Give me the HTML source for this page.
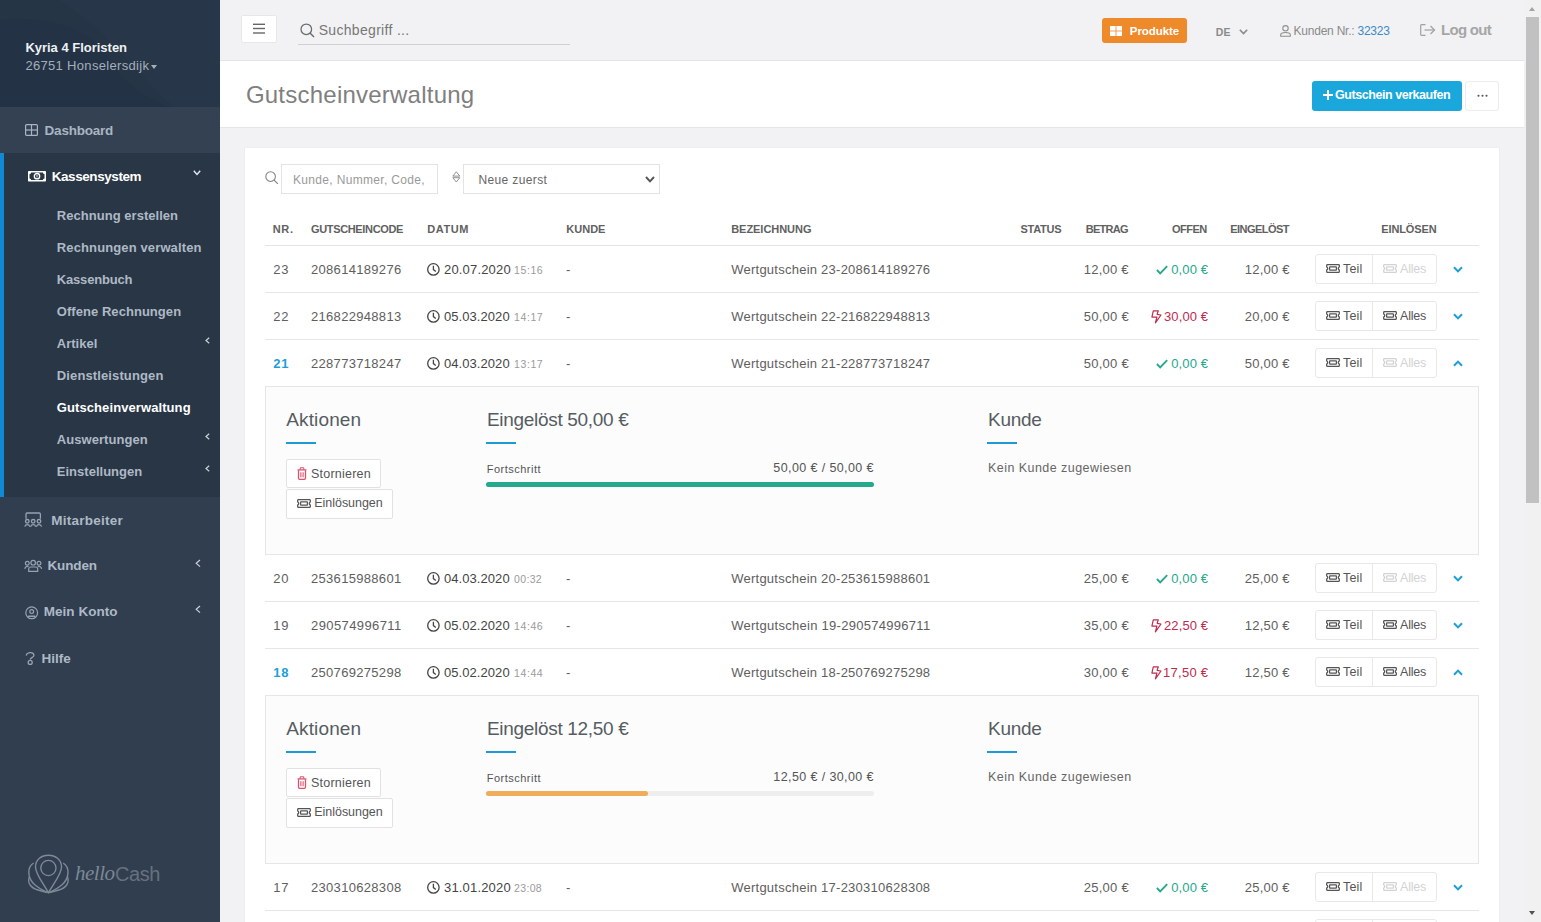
<!DOCTYPE html>
<html><head><meta charset="utf-8"><title>Gutscheinverwaltung</title><style>
*{box-sizing:border-box;margin:0;padding:0}
html,body{width:1541px;height:922px;overflow:hidden;background:#f2f2f4;font-family:"Liberation Sans",sans-serif;color:#555;position:relative}
.abs{position:absolute}
.ic{position:absolute;overflow:visible}
.t{position:absolute;white-space:nowrap;line-height:1}
#sb{position:absolute;left:0;top:0;width:220px;height:922px;background:#303e4f;overflow:hidden}
#sbtop{position:absolute;left:0;top:0;width:220px;height:107px;background:#263546}
#dash{position:absolute;left:0;top:107px;width:220px;height:46px;background:#334153}
#kasse{position:absolute;left:0;top:153px;width:220px;height:344px;background:#293646}
#kasse .bar{position:absolute;left:0;top:0;width:4px;height:344px;background:#118ad6}
#hdr{position:absolute;left:220px;top:0;width:1304px;height:61px;background:#f2f2f4;border-bottom:1px solid #e3e4e7}
#title{position:absolute;left:220px;top:61px;width:1304px;height:67px;background:#fff;border-bottom:1px solid #e6e6e8}
#card{position:absolute;left:245px;top:148px;width:1254px;height:800px;background:#fff;box-shadow:0 0 1px rgba(0,0,0,0.12)}
#scroll{position:absolute;left:1524px;top:0;width:17px;height:922px;background:#f1f1f1}
</style></head><body>
<div id="sb">
<div id="sbtop"><svg width="220" height="107" style="position:absolute;left:0;top:0"><path d="M0,20 C40,15 90,25 110,60 C125,85 150,100 170,107 L0,107 Z" fill="#223042" opacity="0.6"/><path d="M60,0 L220,0 L220,107 L175,107 C140,80 120,40 60,0 Z" fill="#283a4c" opacity="0.5"/></svg></div>
<div id="dash"></div>
<div id="kasse"><div class="bar"></div></div>
</div>
<div class="abs" style="left:150.5px;top:64.5px;width:0;height:0;border-left:3.7px solid transparent;border-right:3.7px solid transparent;border-top:4.5px solid #a4afbb"></div>
<svg class="ic" style="left:24.5px;top:124px;" width="13" height="12" viewBox="0 0 13 12"><rect x="0.6" y="0.6" width="11.8" height="10.8" rx="1" fill="none" stroke="#aab5c1" stroke-width="1.2"/><line x1="6.5" y1="0.6" x2="6.5" y2="11.4" stroke="#aab5c1" stroke-width="1.2"/><line x1="0.6" y1="6" x2="12.4" y2="6" stroke="#aab5c1" stroke-width="1.2"/></svg>
<svg class="ic" style="left:28.2px;top:170.8px;" width="18" height="10.4" viewBox="0 0 18 10.4"><rect x="0" y="0" width="18" height="10.4" rx="0.6" fill="#fff"/><path d="M3.1,1.4 H14.9 A1.6,1.6 0 0 0 16.5,3 V7.4 A1.6,1.6 0 0 0 14.9,9 H3.1 A1.6,1.6 0 0 0 1.5,7.4 V3 A1.6,1.6 0 0 0 3.1,1.4 Z" fill="#293646"/><circle cx="9" cy="5.2" r="2.7" fill="none" stroke="#fff" stroke-width="1.3"/><rect x="8.4" y="3.9" width="1.2" height="2.6" fill="#c8ccd2"/></svg>
<svg class="ic" style="left:193px;top:170px;" width="8" height="6" viewBox="0 0 8 6"><polyline points="0.8,0.8 4,4.4 7.2,0.8" fill="none" stroke="#e8ecf0" stroke-width="1.4"/></svg>
<svg class="ic" style="left:205px;top:336.7px;" width="5" height="7" viewBox="0 0 5 7"><polyline points="4.2,0.7 1,3.5 4.2,6.3" fill="none" stroke="#c9d1da" stroke-width="1.2"/></svg>
<svg class="ic" style="left:205px;top:432.7px;" width="5" height="7" viewBox="0 0 5 7"><polyline points="4.2,0.7 1,3.5 4.2,6.3" fill="none" stroke="#c9d1da" stroke-width="1.2"/></svg>
<svg class="ic" style="left:205px;top:464.7px;" width="5" height="7" viewBox="0 0 5 7"><polyline points="4.2,0.7 1,3.5 4.2,6.3" fill="none" stroke="#c9d1da" stroke-width="1.2"/></svg>
<svg class="ic" style="left:24px;top:512px;" width="18" height="16" viewBox="0 0 18 16"><g fill="none" stroke="#96a3b2" stroke-width="1.3"><path d="M2,6.8 V2.2 A1.2,1.2 0 0 1 3.2,1 H15.2 A1.2,1.2 0 0 1 16.4,2.2 V6.8"/><circle cx="3.3" cy="9.3" r="1.8"/><circle cx="9.2" cy="9.3" r="1.8"/><circle cx="15" cy="9.3" r="1.8"/><path d="M0.8,14.6 A2.6,2.6 0 0 1 5.8,14.6 M6.7,14.6 A2.6,2.6 0 0 1 11.7,14.6 M12.5,14.6 A2.6,2.6 0 0 1 17.5,14.6"/></g></svg>
<svg class="ic" style="left:24px;top:559px;" width="18" height="14" viewBox="0 0 18 14"><g fill="none" stroke="#96a3b2" stroke-width="1.2"><circle cx="9.2" cy="3.7" r="2.3"/><circle cx="3.3" cy="4.3" r="1.9"/><circle cx="15" cy="4.3" r="1.9"/><path d="M4.7,12.4 V10 A2,2 0 0 1 6.7,8 H11.7 A2,2 0 0 1 13.7,10 V12.4 Z"/><path d="M0.8,9.8 A2.8,2.8 0 0 1 4.6,7.6 M17.6,9.8 A2.8,2.8 0 0 0 13.8,7.6"/></g></svg>
<svg class="ic" style="left:195px;top:559px;" width="6" height="9" viewBox="0 0 6 9"><polyline points="5,1 1.2,4.3 5,7.6" fill="none" stroke="#c9d1da" stroke-width="1.2"/></svg>
<svg class="ic" style="left:24.5px;top:605.5px;" width="14" height="14" viewBox="0 0 14 14"><g fill="none" stroke="#96a3b2" stroke-width="1.2"><circle cx="6.7" cy="6.8" r="5.9"/><circle cx="6.7" cy="5.6" r="1.9"/><path d="M3.6,10.3 H9.8" stroke-linecap="round" stroke-width="1.6"/></g></svg>
<svg class="ic" style="left:195px;top:605px;" width="6" height="9" viewBox="0 0 6 9"><polyline points="5,1 1.2,4.3 5,7.6" fill="none" stroke="#c9d1da" stroke-width="1.2"/></svg>
<svg class="ic" style="left:24.5px;top:651px;" width="11" height="15" viewBox="0 0 11 15"><g fill="none" stroke="#96a3b2" stroke-width="1.3"><path d="M1.4,4.6 C1.2,1.4 8.8,0.2 8.9,4.2 C9,6.6 5.2,6.6 5.2,8.6"/><circle cx="5.2" cy="11.4" r="2"/></g></svg>
<svg class="ic" style="left:25px;top:850px;" width="47" height="48" viewBox="0 0 47 48"><g fill="none" stroke="#7f8a96" stroke-width="1.4"><path d="M23.4,42.7 C18,33 10.5,24 10.5,17 C10.5,9.5 16.5,5.2 23.4,5.2 C30.3,5.2 36.5,9.5 36.5,17 C36.5,24 29,33 23.4,42.7 Z"/><circle cx="23.4" cy="18" r="7.6"/><path d="M8.6,13 C2,17 2,28 10,35 C14,38.5 19,41 22.6,42.6"/><path d="M4.3,27 C2,33 6,38 13,40 C17,41.2 20,42 22.6,42.6"/><path d="M 38.2 13.0 C 44.8 17.0 44.8 28.0 36.8 35.0 C 32.8 38.5 27.8 41.0 24.2 42.6"/><path d="M 42.5 27.0 C 44.8 33.0 40.8 38.0 33.8 40.0 C 29.8 41.2 26.8 42.0 24.2 42.6"/></g></svg>
<div class="t" style="left:75px;top:863px;font-family:'Liberation Serif',serif;font-style:italic;font-size:21px;color:#7d8894;letter-spacing:-0.5px">hello</div>
<div class="t" style="left:115px;top:863.5px;font-size:20px;color:#66717d;letter-spacing:-0.4px">Cash</div>
<div id="hdr"></div>
<div class="abs" style="left:241px;top:15px;width:36px;height:28px;background:#fff;border:1px solid #e6e7ea;border-radius:2px"></div>
<svg class="ic" style="left:253px;top:23px;" width="12" height="11" viewBox="0 0 12 11"><g stroke="#666" stroke-width="1.4"><line x1="0" y1="1.3" x2="12" y2="1.3"/><line x1="0" y1="5.5" x2="12" y2="5.5"/><line x1="0" y1="10" x2="12" y2="10"/></g></svg>
<svg class="ic" style="left:299.5px;top:22.5px;" width="15" height="15" viewBox="0 0 15 15"><circle cx="6.3" cy="6.3" r="5.3" fill="none" stroke="#6a6a6a" stroke-width="1.25"/><line x1="10" y1="10" x2="14" y2="14" stroke="#6a6a6a" stroke-width="1.4"/></svg>
<div class="abs" style="left:298px;top:44px;width:272px;height:1px;background:#cfd0d3"></div>
<div class="abs" style="left:1102px;top:18px;width:85px;height:25px;background:#ef8a2b;border-radius:3px"></div>
<svg class="ic" style="left:1109.5px;top:26px;" width="12" height="10" viewBox="0 0 12 10"><rect x="0" y="0" width="5.6" height="4.6" fill="#fff"/><rect x="6.4" y="0" width="5.6" height="4.6" fill="#fff"/><rect x="0" y="5.4" width="5.6" height="4.6" fill="#fff"/><rect x="6.4" y="5.4" width="5.6" height="4.6" fill="#fff"/></svg>
<svg class="ic" style="left:1239.3px;top:28.6px;" width="9" height="6" viewBox="0 0 9 6"><polyline points="0.8,0.8 4.5,4.6 8.2,0.8" fill="none" stroke="#8a8a8a" stroke-width="1.6"/></svg>
<svg class="ic" style="left:1280px;top:25px;" width="11" height="12" viewBox="0 0 11 12"><circle cx="5.5" cy="3.3" r="2.7" fill="none" stroke="#8f8f8f" stroke-width="1.1"/><path d="M0.7,11.3 V9.8 C0.7,6.8 10.3,6.8 10.3,9.8 V11.3 Z" fill="none" stroke="#8f8f8f" stroke-width="1.1"/></svg>
<svg class="ic" style="left:1419.5px;top:23.5px;" width="16" height="12" viewBox="0 0 16 12"><path d="M5.5,0.7 H1.5 A0.8,0.8 0 0 0 0.7,1.5 V10.5 A0.8,0.8 0 0 0 1.5,11.3 H5.5" fill="none" stroke="#a0a0a0" stroke-width="1.2"/><line x1="4.5" y1="6" x2="14.5" y2="6" stroke="#a0a0a0" stroke-width="1.2"/><polyline points="10.5,2 14.5,6 10.5,10" fill="none" stroke="#a0a0a0" stroke-width="1.2"/></svg>
<div id="title"></div>
<div class="abs" style="left:1312px;top:81px;width:150px;height:30px;background:#19a7dc;border-radius:3px"></div>
<svg class="ic" style="left:1322.5px;top:90px;" width="10" height="10" viewBox="0 0 10 10"><line x1="5" y1="0" x2="5" y2="10" stroke="#fff" stroke-width="2"/><line x1="0" y1="5" x2="10" y2="5" stroke="#fff" stroke-width="2"/></svg>
<div class="abs" style="left:1465px;top:81px;width:34px;height:30px;background:#fff;border:1px solid #ececec;border-radius:3px"></div>
<svg class="ic" style="left:1476.5px;top:93.5px;" width="12" height="4" viewBox="0 0 12 4"><circle cx="1.5" cy="1.8" r="1.05" fill="#555"/><circle cx="5.5" cy="1.8" r="1.05" fill="#555"/><circle cx="9.5" cy="1.8" r="1.05" fill="#555"/></svg>
<div id="card"></div>
<svg class="ic" style="left:264.5px;top:170.5px;" width="14" height="14" viewBox="0 0 14 14"><circle cx="5.6" cy="5.6" r="4.8" fill="none" stroke="#808080" stroke-width="1.05"/><line x1="9.1" y1="9.1" x2="12.9" y2="12.9" stroke="#808080" stroke-width="1.15"/></svg>
<div class="abs" style="left:281px;top:164px;width:157px;height:30px;border:1px solid #e3e3e3;background:#fff"></div>
<svg class="ic" style="left:451.5px;top:171px;" width="10" height="12" viewBox="0 0 10 12"><g fill="none" stroke="#8a8a8a" stroke-width="0.95" stroke-linejoin="round"><path d="M0.8,5.1 L4.3,0.8 L7.8,5.1 Z"/><path d="M0.8,6.7 L4.3,11 L7.8,6.7 Z"/></g></svg>
<div class="abs" style="left:463px;top:164px;width:197px;height:30px;border:1px solid #e3e3e3;background:#fff"></div>
<svg class="ic" style="left:645px;top:176px;" width="10" height="7" viewBox="0 0 10 7"><polyline points="1,1 5,5.3 9,1" fill="none" stroke="#555" stroke-width="1.9"/></svg>
<div class="abs" style="left:265px;top:245px;width:1214px;height:1px;background:#e3e3e3"></div>
<div class="abs" style="left:265px;top:292px;width:1214px;height:1px;background:#e6e6e6"></div>
<svg class="ic" style="left:427px;top:262.5px;" width="13" height="13" viewBox="0 0 13 13"><circle cx="6.4" cy="6.4" r="5.7" fill="none" stroke="#444" stroke-width="1.3"/><polyline points="6.4,2.8 6.4,6.6 8.8,8.4" fill="none" stroke="#444" stroke-width="1.3"/></svg>
<svg class="ic" style="left:1155.5px;top:264.5px;" width="12" height="10" viewBox="0 0 12 10"><polyline points="0.9,5 4.2,8.3 11.2,1.2" fill="none" stroke="#25a88b" stroke-width="1.9"/></svg>
<div class="abs" style="left:1315px;top:254px;width:122px;height:30px;border:1px solid #e8e8e8;border-radius:3px;background:#fff"></div>
<div class="abs" style="left:1372px;top:254px;width:1px;height:30px;background:#e8e8e8"></div>
<svg class="ic" style="left:1326px;top:263.5px;" width="14" height="9" viewBox="0 0 14 9"><path d="M1.2,0.7 H12.8 A0.6,0.6 0 0 1 13.3,1.3 V3 A1.6,1.6 0 0 0 13.3,6 V7.7 A0.6,0.6 0 0 1 12.8,8.3 H1.2 A0.6,0.6 0 0 1 0.7,7.7 V6 A1.6,1.6 0 0 0 0.7,3 V1.3 A0.6,0.6 0 0 1 1.2,0.7 Z" fill="none" stroke="#555" stroke-width="1.3"/><rect x="3.6" y="2.8" width="6.8" height="3.4" rx="0.4" fill="none" stroke="#555" stroke-width="1.2"/></svg>
<svg class="ic" style="left:1383px;top:263.5px;" width="14" height="9" viewBox="0 0 14 9"><path d="M1.2,0.7 H12.8 A0.6,0.6 0 0 1 13.3,1.3 V3 A1.6,1.6 0 0 0 13.3,6 V7.7 A0.6,0.6 0 0 1 12.8,8.3 H1.2 A0.6,0.6 0 0 1 0.7,7.7 V6 A1.6,1.6 0 0 0 0.7,3 V1.3 A0.6,0.6 0 0 1 1.2,0.7 Z" fill="none" stroke="#d3d3d3" stroke-width="1.3"/><rect x="3.6" y="2.8" width="6.8" height="3.4" rx="0.4" fill="none" stroke="#d3d3d3" stroke-width="1.2"/></svg>
<svg class="ic" style="left:1452.5px;top:265.5px;" width="10" height="7" viewBox="0 0 10 7"><polyline points="1,1.2 5,5.4 9,1.2" fill="none" stroke="#1d9fd6" stroke-width="2"/></svg>
<div class="abs" style="left:265px;top:339px;width:1214px;height:1px;background:#e6e6e6"></div>
<svg class="ic" style="left:427px;top:309.5px;" width="13" height="13" viewBox="0 0 13 13"><circle cx="6.4" cy="6.4" r="5.7" fill="none" stroke="#444" stroke-width="1.3"/><polyline points="6.4,2.8 6.4,6.6 8.8,8.4" fill="none" stroke="#444" stroke-width="1.3"/></svg>
<svg class="ic" style="left:1150.5px;top:309.5px;" width="11" height="14" viewBox="0 0 11 14"><path d="M2.3,0.9 H7.3 L6.1,4.3 L10,5 L4.4,12.8 L5.9,7.1 H0.9 Z" fill="none" stroke="#bd2b4f" stroke-width="1.2" stroke-linejoin="round"/></svg>
<div class="abs" style="left:1315px;top:301px;width:122px;height:30px;border:1px solid #e8e8e8;border-radius:3px;background:#fff"></div>
<div class="abs" style="left:1372px;top:301px;width:1px;height:30px;background:#e8e8e8"></div>
<svg class="ic" style="left:1326px;top:310.5px;" width="14" height="9" viewBox="0 0 14 9"><path d="M1.2,0.7 H12.8 A0.6,0.6 0 0 1 13.3,1.3 V3 A1.6,1.6 0 0 0 13.3,6 V7.7 A0.6,0.6 0 0 1 12.8,8.3 H1.2 A0.6,0.6 0 0 1 0.7,7.7 V6 A1.6,1.6 0 0 0 0.7,3 V1.3 A0.6,0.6 0 0 1 1.2,0.7 Z" fill="none" stroke="#555" stroke-width="1.3"/><rect x="3.6" y="2.8" width="6.8" height="3.4" rx="0.4" fill="none" stroke="#555" stroke-width="1.2"/></svg>
<svg class="ic" style="left:1383px;top:310.5px;" width="14" height="9" viewBox="0 0 14 9"><path d="M1.2,0.7 H12.8 A0.6,0.6 0 0 1 13.3,1.3 V3 A1.6,1.6 0 0 0 13.3,6 V7.7 A0.6,0.6 0 0 1 12.8,8.3 H1.2 A0.6,0.6 0 0 1 0.7,7.7 V6 A1.6,1.6 0 0 0 0.7,3 V1.3 A0.6,0.6 0 0 1 1.2,0.7 Z" fill="none" stroke="#555" stroke-width="1.3"/><rect x="3.6" y="2.8" width="6.8" height="3.4" rx="0.4" fill="none" stroke="#555" stroke-width="1.2"/></svg>
<svg class="ic" style="left:1452.5px;top:312.5px;" width="10" height="7" viewBox="0 0 10 7"><polyline points="1,1.2 5,5.4 9,1.2" fill="none" stroke="#1d9fd6" stroke-width="2"/></svg>
<div class="abs" style="left:265px;top:386px;width:1214px;height:1px;background:#e6e6e6"></div>
<svg class="ic" style="left:427px;top:356.5px;" width="13" height="13" viewBox="0 0 13 13"><circle cx="6.4" cy="6.4" r="5.7" fill="none" stroke="#444" stroke-width="1.3"/><polyline points="6.4,2.8 6.4,6.6 8.8,8.4" fill="none" stroke="#444" stroke-width="1.3"/></svg>
<svg class="ic" style="left:1155.5px;top:358.5px;" width="12" height="10" viewBox="0 0 12 10"><polyline points="0.9,5 4.2,8.3 11.2,1.2" fill="none" stroke="#25a88b" stroke-width="1.9"/></svg>
<div class="abs" style="left:1315px;top:348px;width:122px;height:30px;border:1px solid #e8e8e8;border-radius:3px;background:#fff"></div>
<div class="abs" style="left:1372px;top:348px;width:1px;height:30px;background:#e8e8e8"></div>
<svg class="ic" style="left:1326px;top:357.5px;" width="14" height="9" viewBox="0 0 14 9"><path d="M1.2,0.7 H12.8 A0.6,0.6 0 0 1 13.3,1.3 V3 A1.6,1.6 0 0 0 13.3,6 V7.7 A0.6,0.6 0 0 1 12.8,8.3 H1.2 A0.6,0.6 0 0 1 0.7,7.7 V6 A1.6,1.6 0 0 0 0.7,3 V1.3 A0.6,0.6 0 0 1 1.2,0.7 Z" fill="none" stroke="#555" stroke-width="1.3"/><rect x="3.6" y="2.8" width="6.8" height="3.4" rx="0.4" fill="none" stroke="#555" stroke-width="1.2"/></svg>
<svg class="ic" style="left:1383px;top:357.5px;" width="14" height="9" viewBox="0 0 14 9"><path d="M1.2,0.7 H12.8 A0.6,0.6 0 0 1 13.3,1.3 V3 A1.6,1.6 0 0 0 13.3,6 V7.7 A0.6,0.6 0 0 1 12.8,8.3 H1.2 A0.6,0.6 0 0 1 0.7,7.7 V6 A1.6,1.6 0 0 0 0.7,3 V1.3 A0.6,0.6 0 0 1 1.2,0.7 Z" fill="none" stroke="#d3d3d3" stroke-width="1.3"/><rect x="3.6" y="2.8" width="6.8" height="3.4" rx="0.4" fill="none" stroke="#d3d3d3" stroke-width="1.2"/></svg>
<svg class="ic" style="left:1452.5px;top:359.5px;" width="10" height="7" viewBox="0 0 10 7"><polyline points="1,5.8 5,1.6 9,5.8" fill="none" stroke="#1d9fd6" stroke-width="2"/></svg>
<div class="abs" style="left:265px;top:386px;width:1214px;height:169px;border:1px solid #e6e6e6;background:#fcfcfc"></div>
<div class="abs" style="left:286px;top:442px;width:30px;height:2px;background:#1d9bd5"></div>
<div class="abs" style="left:286px;top:459px;width:95px;height:29px;border:1px solid #e2e2e2;border-radius:2px;background:#fff"></div>
<svg class="ic" style="left:297.2px;top:466.8px;" width="10" height="13" viewBox="0 0 10 13"><g fill="none" stroke="#d9536f"><path d="M0.6,2.9 H9.4" stroke-width="1.3"/><path d="M3.2,2.6 V1.5 A0.7,0.7 0 0 1 3.9,0.8 H6.1 A0.7,0.7 0 0 1 6.8,1.5 V2.6" stroke-width="1.1"/><path d="M1.5,3.2 V11.1 A1.2,1.2 0 0 0 2.7,12.3 H7.3 A1.2,1.2 0 0 0 8.5,11.1 V3.2" stroke-width="1.3"/><path d="M3.9,5.3 V10.3 M6.1,5.3 V10.3" stroke-width="1.1"/></g></svg>
<div class="abs" style="left:286px;top:489px;width:107px;height:30px;border:1px solid #e2e2e2;border-radius:2px;background:#fff"></div>
<svg class="ic" style="left:297px;top:499px;" width="14" height="9" viewBox="0 0 14 9"><path d="M1.2,0.7 H12.8 A0.6,0.6 0 0 1 13.3,1.3 V3 A1.6,1.6 0 0 0 13.3,6 V7.7 A0.6,0.6 0 0 1 12.8,8.3 H1.2 A0.6,0.6 0 0 1 0.7,7.7 V6 A1.6,1.6 0 0 0 0.7,3 V1.3 A0.6,0.6 0 0 1 1.2,0.7 Z" fill="none" stroke="#555" stroke-width="1.3"/><rect x="3.6" y="2.8" width="6.8" height="3.4" rx="0.4" fill="none" stroke="#555" stroke-width="1.2"/></svg>
<div class="abs" style="left:486px;top:442px;width:30px;height:2px;background:#1d9bd5"></div>
<div class="abs" style="left:486px;top:482px;width:388px;height:5px;border-radius:3px;background:#eeeeee"></div>
<div class="abs" style="left:486px;top:482px;width:388.0px;height:5px;border-radius:3px;background:#25a88b"></div>
<div class="abs" style="left:987px;top:442px;width:30px;height:2px;background:#1d9bd5"></div>
<div class="abs" style="left:265px;top:601px;width:1214px;height:1px;background:#e6e6e6"></div>
<svg class="ic" style="left:427px;top:571.5px;" width="13" height="13" viewBox="0 0 13 13"><circle cx="6.4" cy="6.4" r="5.7" fill="none" stroke="#444" stroke-width="1.3"/><polyline points="6.4,2.8 6.4,6.6 8.8,8.4" fill="none" stroke="#444" stroke-width="1.3"/></svg>
<svg class="ic" style="left:1155.5px;top:573.5px;" width="12" height="10" viewBox="0 0 12 10"><polyline points="0.9,5 4.2,8.3 11.2,1.2" fill="none" stroke="#25a88b" stroke-width="1.9"/></svg>
<div class="abs" style="left:1315px;top:563px;width:122px;height:30px;border:1px solid #e8e8e8;border-radius:3px;background:#fff"></div>
<div class="abs" style="left:1372px;top:563px;width:1px;height:30px;background:#e8e8e8"></div>
<svg class="ic" style="left:1326px;top:572.5px;" width="14" height="9" viewBox="0 0 14 9"><path d="M1.2,0.7 H12.8 A0.6,0.6 0 0 1 13.3,1.3 V3 A1.6,1.6 0 0 0 13.3,6 V7.7 A0.6,0.6 0 0 1 12.8,8.3 H1.2 A0.6,0.6 0 0 1 0.7,7.7 V6 A1.6,1.6 0 0 0 0.7,3 V1.3 A0.6,0.6 0 0 1 1.2,0.7 Z" fill="none" stroke="#555" stroke-width="1.3"/><rect x="3.6" y="2.8" width="6.8" height="3.4" rx="0.4" fill="none" stroke="#555" stroke-width="1.2"/></svg>
<svg class="ic" style="left:1383px;top:572.5px;" width="14" height="9" viewBox="0 0 14 9"><path d="M1.2,0.7 H12.8 A0.6,0.6 0 0 1 13.3,1.3 V3 A1.6,1.6 0 0 0 13.3,6 V7.7 A0.6,0.6 0 0 1 12.8,8.3 H1.2 A0.6,0.6 0 0 1 0.7,7.7 V6 A1.6,1.6 0 0 0 0.7,3 V1.3 A0.6,0.6 0 0 1 1.2,0.7 Z" fill="none" stroke="#d3d3d3" stroke-width="1.3"/><rect x="3.6" y="2.8" width="6.8" height="3.4" rx="0.4" fill="none" stroke="#d3d3d3" stroke-width="1.2"/></svg>
<svg class="ic" style="left:1452.5px;top:574.5px;" width="10" height="7" viewBox="0 0 10 7"><polyline points="1,1.2 5,5.4 9,1.2" fill="none" stroke="#1d9fd6" stroke-width="2"/></svg>
<div class="abs" style="left:265px;top:648px;width:1214px;height:1px;background:#e6e6e6"></div>
<svg class="ic" style="left:427px;top:618.5px;" width="13" height="13" viewBox="0 0 13 13"><circle cx="6.4" cy="6.4" r="5.7" fill="none" stroke="#444" stroke-width="1.3"/><polyline points="6.4,2.8 6.4,6.6 8.8,8.4" fill="none" stroke="#444" stroke-width="1.3"/></svg>
<svg class="ic" style="left:1150.5px;top:618.5px;" width="11" height="14" viewBox="0 0 11 14"><path d="M2.3,0.9 H7.3 L6.1,4.3 L10,5 L4.4,12.8 L5.9,7.1 H0.9 Z" fill="none" stroke="#bd2b4f" stroke-width="1.2" stroke-linejoin="round"/></svg>
<div class="abs" style="left:1315px;top:610px;width:122px;height:30px;border:1px solid #e8e8e8;border-radius:3px;background:#fff"></div>
<div class="abs" style="left:1372px;top:610px;width:1px;height:30px;background:#e8e8e8"></div>
<svg class="ic" style="left:1326px;top:619.5px;" width="14" height="9" viewBox="0 0 14 9"><path d="M1.2,0.7 H12.8 A0.6,0.6 0 0 1 13.3,1.3 V3 A1.6,1.6 0 0 0 13.3,6 V7.7 A0.6,0.6 0 0 1 12.8,8.3 H1.2 A0.6,0.6 0 0 1 0.7,7.7 V6 A1.6,1.6 0 0 0 0.7,3 V1.3 A0.6,0.6 0 0 1 1.2,0.7 Z" fill="none" stroke="#555" stroke-width="1.3"/><rect x="3.6" y="2.8" width="6.8" height="3.4" rx="0.4" fill="none" stroke="#555" stroke-width="1.2"/></svg>
<svg class="ic" style="left:1383px;top:619.5px;" width="14" height="9" viewBox="0 0 14 9"><path d="M1.2,0.7 H12.8 A0.6,0.6 0 0 1 13.3,1.3 V3 A1.6,1.6 0 0 0 13.3,6 V7.7 A0.6,0.6 0 0 1 12.8,8.3 H1.2 A0.6,0.6 0 0 1 0.7,7.7 V6 A1.6,1.6 0 0 0 0.7,3 V1.3 A0.6,0.6 0 0 1 1.2,0.7 Z" fill="none" stroke="#555" stroke-width="1.3"/><rect x="3.6" y="2.8" width="6.8" height="3.4" rx="0.4" fill="none" stroke="#555" stroke-width="1.2"/></svg>
<svg class="ic" style="left:1452.5px;top:621.5px;" width="10" height="7" viewBox="0 0 10 7"><polyline points="1,1.2 5,5.4 9,1.2" fill="none" stroke="#1d9fd6" stroke-width="2"/></svg>
<div class="abs" style="left:265px;top:695px;width:1214px;height:1px;background:#e6e6e6"></div>
<svg class="ic" style="left:427px;top:665.5px;" width="13" height="13" viewBox="0 0 13 13"><circle cx="6.4" cy="6.4" r="5.7" fill="none" stroke="#444" stroke-width="1.3"/><polyline points="6.4,2.8 6.4,6.6 8.8,8.4" fill="none" stroke="#444" stroke-width="1.3"/></svg>
<svg class="ic" style="left:1150.5px;top:665.5px;" width="11" height="14" viewBox="0 0 11 14"><path d="M2.3,0.9 H7.3 L6.1,4.3 L10,5 L4.4,12.8 L5.9,7.1 H0.9 Z" fill="none" stroke="#bd2b4f" stroke-width="1.2" stroke-linejoin="round"/></svg>
<div class="abs" style="left:1315px;top:657px;width:122px;height:30px;border:1px solid #e8e8e8;border-radius:3px;background:#fff"></div>
<div class="abs" style="left:1372px;top:657px;width:1px;height:30px;background:#e8e8e8"></div>
<svg class="ic" style="left:1326px;top:666.5px;" width="14" height="9" viewBox="0 0 14 9"><path d="M1.2,0.7 H12.8 A0.6,0.6 0 0 1 13.3,1.3 V3 A1.6,1.6 0 0 0 13.3,6 V7.7 A0.6,0.6 0 0 1 12.8,8.3 H1.2 A0.6,0.6 0 0 1 0.7,7.7 V6 A1.6,1.6 0 0 0 0.7,3 V1.3 A0.6,0.6 0 0 1 1.2,0.7 Z" fill="none" stroke="#555" stroke-width="1.3"/><rect x="3.6" y="2.8" width="6.8" height="3.4" rx="0.4" fill="none" stroke="#555" stroke-width="1.2"/></svg>
<svg class="ic" style="left:1383px;top:666.5px;" width="14" height="9" viewBox="0 0 14 9"><path d="M1.2,0.7 H12.8 A0.6,0.6 0 0 1 13.3,1.3 V3 A1.6,1.6 0 0 0 13.3,6 V7.7 A0.6,0.6 0 0 1 12.8,8.3 H1.2 A0.6,0.6 0 0 1 0.7,7.7 V6 A1.6,1.6 0 0 0 0.7,3 V1.3 A0.6,0.6 0 0 1 1.2,0.7 Z" fill="none" stroke="#555" stroke-width="1.3"/><rect x="3.6" y="2.8" width="6.8" height="3.4" rx="0.4" fill="none" stroke="#555" stroke-width="1.2"/></svg>
<svg class="ic" style="left:1452.5px;top:668.5px;" width="10" height="7" viewBox="0 0 10 7"><polyline points="1,5.8 5,1.6 9,5.8" fill="none" stroke="#1d9fd6" stroke-width="2"/></svg>
<div class="abs" style="left:265px;top:695px;width:1214px;height:169px;border:1px solid #e6e6e6;background:#fcfcfc"></div>
<div class="abs" style="left:286px;top:751px;width:30px;height:2px;background:#1d9bd5"></div>
<div class="abs" style="left:286px;top:768px;width:95px;height:29px;border:1px solid #e2e2e2;border-radius:2px;background:#fff"></div>
<svg class="ic" style="left:297.2px;top:775.8px;" width="10" height="13" viewBox="0 0 10 13"><g fill="none" stroke="#d9536f"><path d="M0.6,2.9 H9.4" stroke-width="1.3"/><path d="M3.2,2.6 V1.5 A0.7,0.7 0 0 1 3.9,0.8 H6.1 A0.7,0.7 0 0 1 6.8,1.5 V2.6" stroke-width="1.1"/><path d="M1.5,3.2 V11.1 A1.2,1.2 0 0 0 2.7,12.3 H7.3 A1.2,1.2 0 0 0 8.5,11.1 V3.2" stroke-width="1.3"/><path d="M3.9,5.3 V10.3 M6.1,5.3 V10.3" stroke-width="1.1"/></g></svg>
<div class="abs" style="left:286px;top:798px;width:107px;height:30px;border:1px solid #e2e2e2;border-radius:2px;background:#fff"></div>
<svg class="ic" style="left:297px;top:808px;" width="14" height="9" viewBox="0 0 14 9"><path d="M1.2,0.7 H12.8 A0.6,0.6 0 0 1 13.3,1.3 V3 A1.6,1.6 0 0 0 13.3,6 V7.7 A0.6,0.6 0 0 1 12.8,8.3 H1.2 A0.6,0.6 0 0 1 0.7,7.7 V6 A1.6,1.6 0 0 0 0.7,3 V1.3 A0.6,0.6 0 0 1 1.2,0.7 Z" fill="none" stroke="#555" stroke-width="1.3"/><rect x="3.6" y="2.8" width="6.8" height="3.4" rx="0.4" fill="none" stroke="#555" stroke-width="1.2"/></svg>
<div class="abs" style="left:486px;top:751px;width:30px;height:2px;background:#1d9bd5"></div>
<div class="abs" style="left:486px;top:791px;width:388px;height:5px;border-radius:3px;background:#eeeeee"></div>
<div class="abs" style="left:486px;top:791px;width:161.7px;height:5px;border-radius:3px;background:#efac5a"></div>
<div class="abs" style="left:987px;top:751px;width:30px;height:2px;background:#1d9bd5"></div>
<div class="abs" style="left:265px;top:910px;width:1214px;height:1px;background:#e6e6e6"></div>
<svg class="ic" style="left:427px;top:880.5px;" width="13" height="13" viewBox="0 0 13 13"><circle cx="6.4" cy="6.4" r="5.7" fill="none" stroke="#444" stroke-width="1.3"/><polyline points="6.4,2.8 6.4,6.6 8.8,8.4" fill="none" stroke="#444" stroke-width="1.3"/></svg>
<svg class="ic" style="left:1155.5px;top:882.5px;" width="12" height="10" viewBox="0 0 12 10"><polyline points="0.9,5 4.2,8.3 11.2,1.2" fill="none" stroke="#25a88b" stroke-width="1.9"/></svg>
<div class="abs" style="left:1315px;top:872px;width:122px;height:30px;border:1px solid #e8e8e8;border-radius:3px;background:#fff"></div>
<div class="abs" style="left:1372px;top:872px;width:1px;height:30px;background:#e8e8e8"></div>
<svg class="ic" style="left:1326px;top:881.5px;" width="14" height="9" viewBox="0 0 14 9"><path d="M1.2,0.7 H12.8 A0.6,0.6 0 0 1 13.3,1.3 V3 A1.6,1.6 0 0 0 13.3,6 V7.7 A0.6,0.6 0 0 1 12.8,8.3 H1.2 A0.6,0.6 0 0 1 0.7,7.7 V6 A1.6,1.6 0 0 0 0.7,3 V1.3 A0.6,0.6 0 0 1 1.2,0.7 Z" fill="none" stroke="#555" stroke-width="1.3"/><rect x="3.6" y="2.8" width="6.8" height="3.4" rx="0.4" fill="none" stroke="#555" stroke-width="1.2"/></svg>
<svg class="ic" style="left:1383px;top:881.5px;" width="14" height="9" viewBox="0 0 14 9"><path d="M1.2,0.7 H12.8 A0.6,0.6 0 0 1 13.3,1.3 V3 A1.6,1.6 0 0 0 13.3,6 V7.7 A0.6,0.6 0 0 1 12.8,8.3 H1.2 A0.6,0.6 0 0 1 0.7,7.7 V6 A1.6,1.6 0 0 0 0.7,3 V1.3 A0.6,0.6 0 0 1 1.2,0.7 Z" fill="none" stroke="#d3d3d3" stroke-width="1.3"/><rect x="3.6" y="2.8" width="6.8" height="3.4" rx="0.4" fill="none" stroke="#d3d3d3" stroke-width="1.2"/></svg>
<svg class="ic" style="left:1452.5px;top:883.5px;" width="10" height="7" viewBox="0 0 10 7"><polyline points="1,1.2 5,5.4 9,1.2" fill="none" stroke="#1d9fd6" stroke-width="2"/></svg>
<div class="abs" style="left:1315px;top:919px;width:122px;height:30px;border:1px solid #e8e8e8;border-radius:3px;background:#fff"></div>
<div class="abs" style="left:1372px;top:919px;width:1px;height:30px;background:#e8e8e8"></div>
<div id="scroll"></div>
<div class="abs" style="left:1526px;top:17px;width:13px;height:486px;background:#c1c1c1"></div>
<div class="abs" style="left:1529px;top:7px;width:0;height:0;border-left:3.5px solid transparent;border-right:3.5px solid transparent;border-bottom:4px solid #a3a3a3"></div>
<div class="abs" style="left:1529px;top:911px;width:0;height:0;border-left:3.5px solid transparent;border-right:3.5px solid transparent;border-top:4px solid #505050"></div>
<div class="t" id="sb1" style="top:40.79px;font-size:13px;font-weight:bold;color:#eef1f4;letter-spacing:-0.014px;left:25.40px;">Kyria 4 Floristen</div>
<div class="t" id="sb2" style="top:58.99px;font-size:13px;font-weight:normal;color:#a4afbb;letter-spacing:0.322px;left:25.40px;">26751 Honselersdijk</div>
<div class="t" id="m_dash" style="top:123.57px;font-size:13.5px;font-weight:bold;color:#aab5c1;letter-spacing:-0.225px;left:44.60px;">Dashboard</div>
<div class="t" id="m_kasse" style="top:169.57px;font-size:13.5px;font-weight:bold;color:#ffffff;letter-spacing:-0.420px;left:51.70px;">Kassensystem</div>
<div class="t" id="sub0" style="top:209.19px;font-size:13px;font-weight:bold;color:#aeb9c5;letter-spacing:0.037px;left:56.80px;">Rechnung erstellen</div>
<div class="t" id="sub1" style="top:241.19px;font-size:13px;font-weight:bold;color:#aeb9c5;letter-spacing:0.124px;left:56.80px;">Rechnungen verwalten</div>
<div class="t" id="sub2" style="top:273.19px;font-size:13px;font-weight:bold;color:#aeb9c5;letter-spacing:-0.176px;left:56.80px;">Kassenbuch</div>
<div class="t" id="sub3" style="top:305.19px;font-size:13px;font-weight:bold;color:#aeb9c5;letter-spacing:0.048px;left:56.80px;">Offene Rechnungen</div>
<div class="t" id="sub4" style="top:337.19px;font-size:13px;font-weight:bold;color:#aeb9c5;letter-spacing:0.000px;left:56.80px;">Artikel</div>
<div class="t" id="sub5" style="top:369.19px;font-size:13px;font-weight:bold;color:#aeb9c5;letter-spacing:0.119px;left:56.80px;">Dienstleistungen</div>
<div class="t" id="sub6" style="top:401.19px;font-size:13px;font-weight:bold;color:#ffffff;letter-spacing:0.089px;left:56.80px;">Gutscheinverwaltung</div>
<div class="t" id="sub7" style="top:433.19px;font-size:13px;font-weight:bold;color:#aeb9c5;letter-spacing:0.053px;left:56.80px;">Auswertungen</div>
<div class="t" id="sub8" style="top:465.19px;font-size:13px;font-weight:bold;color:#aeb9c5;letter-spacing:0.015px;left:56.80px;">Einstellungen</div>
<div class="t" id="m_mit" style="top:513.87px;font-size:13.5px;font-weight:bold;color:#aeb9c5;letter-spacing:0.260px;left:51.20px;">Mitarbeiter</div>
<div class="t" id="m_kun" style="top:559.47px;font-size:13.5px;font-weight:bold;color:#aeb9c5;letter-spacing:-0.120px;left:47.40px;">Kunden</div>
<div class="t" id="m_konto" style="top:605.47px;font-size:13.5px;font-weight:bold;color:#aeb9c5;letter-spacing:0.046px;left:43.70px;">Mein Konto</div>
<div class="t" id="m_hilfe" style="top:651.67px;font-size:13.5px;font-weight:bold;color:#aeb9c5;letter-spacing:0.000px;left:41.50px;">Hilfe</div>
<div class="t" id="h_search" style="top:22.85px;font-size:14px;font-weight:normal;color:#777;letter-spacing:0.312px;left:318.70px;">Suchbegriff ...</div>
<div class="t" id="h_prod" style="top:26.16px;font-size:11.5px;font-weight:bold;color:#ffffff;letter-spacing:-0.058px;left:1129.80px;">Produkte</div>
<div class="t" id="h_de" style="top:26.71px;font-size:10.5px;font-weight:bold;color:#8a8a8a;letter-spacing:0.000px;left:1215.80px;">DE</div>
<div class="t" id="h_kn" style="top:24.84px;font-size:12px;font-weight:normal;color:#8a8a8a;letter-spacing:-0.237px;left:1293.60px;">Kunden Nr.: <span style="color:#3d8ac4">32323</span></div>
<div class="t" id="h_logout" style="top:21.90px;font-size:15px;font-weight:bold;color:#a6a6a6;letter-spacing:-0.701px;left:1441.00px;">Log out</div>
<div class="t" id="ttl" style="top:82.68px;font-size:24px;font-weight:normal;color:#7f7f7f;letter-spacing:0.231px;left:245.90px;">Gutscheinverwaltung</div>
<div class="t" id="b_sell" style="top:89.42px;font-size:12.5px;font-weight:bold;color:#ffffff;letter-spacing:-0.444px;left:1335.00px;">Gutschein verkaufen</div>
<div class="t" id="c_ph" style="top:174.24px;font-size:12px;font-weight:normal;color:#9a9a9a;letter-spacing:0.325px;left:293.00px;">Kunde, Nummer, Code,</div>
<div class="t" id="c_sel" style="top:174.24px;font-size:12px;font-weight:normal;color:#666;letter-spacing:0.380px;left:478.40px;">Neue zuerst</div>
<div class="t" id="th0" style="top:224.49px;font-size:11px;font-weight:bold;color:#616161;letter-spacing:0.600px;left:272.80px;">NR.</div>
<div class="t" id="th1" style="top:224.49px;font-size:11px;font-weight:bold;color:#616161;letter-spacing:-0.348px;left:311.00px;">GUTSCHEINCODE</div>
<div class="t" id="th2" style="top:224.49px;font-size:11px;font-weight:bold;color:#616161;letter-spacing:0.600px;left:427.20px;">DATUM</div>
<div class="t" id="th3" style="top:224.49px;font-size:11px;font-weight:bold;color:#616161;letter-spacing:0.000px;left:566.30px;">KUNDE</div>
<div class="t" id="th4" style="top:224.49px;font-size:11px;font-weight:bold;color:#616161;letter-spacing:-0.040px;left:731.20px;">BEZEICHNUNG</div>
<div class="t" id="th5" style="top:224.49px;font-size:11px;font-weight:bold;color:#616161;letter-spacing:-0.240px;right:479.64px;">STATUS</div>
<div class="t" id="th6" style="top:224.49px;font-size:11px;font-weight:bold;color:#616161;letter-spacing:-0.720px;right:413.12px;">BETRAG</div>
<div class="t" id="th7" style="top:224.49px;font-size:11px;font-weight:bold;color:#616161;letter-spacing:-0.500px;right:334.30px;">OFFEN</div>
<div class="t" id="th8" style="top:224.49px;font-size:11px;font-weight:bold;color:#616161;letter-spacing:-0.550px;right:252.15px;">EINGELÖST</div>
<div class="t" id="th9" style="top:224.49px;font-size:11px;font-weight:bold;color:#616161;letter-spacing:-0.116px;right:104.42px;">EINLÖSEN</div>
<div class="t" id="r0_nr" style="top:262.69px;font-size:13px;font-weight:normal;color:#5e5e5e;letter-spacing:0.800px;left:273.20px;font-weight:normal;">23</div>
<div class="t" id="r0_code" style="top:262.69px;font-size:13px;font-weight:normal;color:#5e5e5e;letter-spacing:0.310px;left:311.00px;">208614189276</div>
<div class="t" id="r0_date" style="top:262.69px;font-size:13px;font-weight:normal;color:#444;letter-spacing:0.176px;left:444.00px;">20.07.2020</div>
<div class="t" id="r0_time" style="top:265.21px;font-size:10.5px;font-weight:normal;color:#9a9a9a;letter-spacing:0.600px;left:514.00px;">15:16</div>
<div class="t" id="r0_dash" style="top:262.69px;font-size:13px;font-weight:normal;color:#5e5e5e;letter-spacing:0.000px;left:566.00px;">-</div>
<div class="t" id="r0_bez" style="top:262.69px;font-size:13px;font-weight:normal;color:#5e5e5e;letter-spacing:0.246px;left:731.20px;">Wertgutschein 23-208614189276</div>
<div class="t" id="r0_bet" style="top:262.69px;font-size:13px;font-weight:normal;color:#5e5e5e;letter-spacing:0.233px;right:412.17px;">12,00 €</div>
<div class="t" id="r0_off" style="top:262.69px;font-size:13px;font-weight:normal;color:#25a88b;letter-spacing:0.120px;right:332.88px;">0,00 €</div>
<div class="t" id="r0_eing" style="top:262.69px;font-size:13px;font-weight:normal;color:#5e5e5e;letter-spacing:0.233px;right:251.27px;">12,00 €</div>
<div class="t" id="r0_teil" style="top:263.02px;font-size:12.5px;font-weight:normal;color:#555;letter-spacing:0.199px;left:1343.00px;">Teil</div>
<div class="t" id="r0_alles" style="top:263.02px;font-size:12.5px;font-weight:normal;color:#d3d3d3;letter-spacing:-0.200px;left:1400.00px;">Alles</div>
<div class="t" id="r1_nr" style="top:309.69px;font-size:13px;font-weight:normal;color:#5e5e5e;letter-spacing:0.800px;left:273.20px;font-weight:normal;">22</div>
<div class="t" id="r1_code" style="top:309.69px;font-size:13px;font-weight:normal;color:#5e5e5e;letter-spacing:0.310px;left:311.00px;">216822948813</div>
<div class="t" id="r1_date" style="top:309.69px;font-size:13px;font-weight:normal;color:#444;letter-spacing:0.065px;left:444.00px;">05.03.2020</div>
<div class="t" id="r1_time" style="top:312.21px;font-size:10.5px;font-weight:normal;color:#9a9a9a;letter-spacing:0.600px;left:514.00px;">14:17</div>
<div class="t" id="r1_dash" style="top:309.69px;font-size:13px;font-weight:normal;color:#5e5e5e;letter-spacing:0.000px;left:566.00px;">-</div>
<div class="t" id="r1_bez" style="top:309.69px;font-size:13px;font-weight:normal;color:#5e5e5e;letter-spacing:0.246px;left:731.20px;">Wertgutschein 22-216822948813</div>
<div class="t" id="r1_bet" style="top:309.69px;font-size:13px;font-weight:normal;color:#5e5e5e;letter-spacing:0.234px;right:412.17px;">50,00 €</div>
<div class="t" id="r1_off" style="top:309.69px;font-size:13px;font-weight:normal;color:#bd2b4f;letter-spacing:0.101px;right:332.90px;">30,00 €</div>
<div class="t" id="r1_eing" style="top:309.69px;font-size:13px;font-weight:normal;color:#5e5e5e;letter-spacing:0.233px;right:251.27px;">20,00 €</div>
<div class="t" id="r1_teil" style="top:310.02px;font-size:12.5px;font-weight:normal;color:#555;letter-spacing:0.199px;left:1343.00px;">Teil</div>
<div class="t" id="r1_alles" style="top:310.02px;font-size:12.5px;font-weight:normal;color:#555;letter-spacing:-0.200px;left:1400.00px;">Alles</div>
<div class="t" id="r2_nr" style="top:356.69px;font-size:13px;font-weight:normal;color:#1d9fd6;letter-spacing:0.800px;left:273.20px;font-weight:bold;">21</div>
<div class="t" id="r2_code" style="top:356.69px;font-size:13px;font-weight:normal;color:#5e5e5e;letter-spacing:0.310px;left:311.00px;">228773718247</div>
<div class="t" id="r2_date" style="top:356.69px;font-size:13px;font-weight:normal;color:#444;letter-spacing:0.065px;left:444.00px;">04.03.2020</div>
<div class="t" id="r2_time" style="top:359.21px;font-size:10.5px;font-weight:normal;color:#9a9a9a;letter-spacing:0.600px;left:514.00px;">13:17</div>
<div class="t" id="r2_dash" style="top:356.69px;font-size:13px;font-weight:normal;color:#5e5e5e;letter-spacing:0.000px;left:566.00px;">-</div>
<div class="t" id="r2_bez" style="top:356.69px;font-size:13px;font-weight:normal;color:#5e5e5e;letter-spacing:0.246px;left:731.20px;">Wertgutschein 21-228773718247</div>
<div class="t" id="r2_bet" style="top:356.69px;font-size:13px;font-weight:normal;color:#5e5e5e;letter-spacing:0.234px;right:412.17px;">50,00 €</div>
<div class="t" id="r2_off" style="top:356.69px;font-size:13px;font-weight:normal;color:#25a88b;letter-spacing:0.120px;right:332.88px;">0,00 €</div>
<div class="t" id="r2_eing" style="top:356.69px;font-size:13px;font-weight:normal;color:#5e5e5e;letter-spacing:0.233px;right:251.27px;">50,00 €</div>
<div class="t" id="r2_teil" style="top:357.02px;font-size:12.5px;font-weight:normal;color:#555;letter-spacing:0.199px;left:1343.00px;">Teil</div>
<div class="t" id="r2_alles" style="top:357.02px;font-size:12.5px;font-weight:normal;color:#d3d3d3;letter-spacing:-0.200px;left:1400.00px;">Alles</div>
<div class="t" id="p21_akt" style="top:409.61px;font-size:19px;font-weight:normal;color:#565c62;letter-spacing:0.143px;left:286.20px;">Aktionen</div>
<div class="t" id="p21_storn" style="top:467.62px;font-size:12.5px;font-weight:normal;color:#555;letter-spacing:0.242px;left:310.90px;">Stornieren</div>
<div class="t" id="p21_einl" style="top:497.42px;font-size:12.5px;font-weight:normal;color:#555;letter-spacing:-0.040px;left:314.30px;">Einlösungen</div>
<div class="t" id="p21_eing" style="top:409.71px;font-size:19px;font-weight:normal;color:#565c62;letter-spacing:-0.313px;left:487.00px;">Eingelöst 50,00 €</div>
<div class="t" id="p21_fort" style="top:463.59px;font-size:11px;font-weight:normal;color:#555;letter-spacing:0.500px;left:486.70px;">Fortschritt</div>
<div class="t" id="p21_prog" style="top:462.12px;font-size:12.5px;font-weight:normal;color:#555;letter-spacing:0.397px;right:667.10px;">50,00 € / 50,00 €</div>
<div class="t" id="p21_kun" style="top:409.91px;font-size:19px;font-weight:normal;color:#565c62;letter-spacing:-0.300px;left:988.10px;">Kunde</div>
<div class="t" id="p21_kein" style="top:462.12px;font-size:12.5px;font-weight:normal;color:#666;letter-spacing:0.450px;left:988.00px;">Kein Kunde zugewiesen</div>
<div class="t" id="r3_nr" style="top:571.69px;font-size:13px;font-weight:normal;color:#5e5e5e;letter-spacing:0.800px;left:273.20px;font-weight:normal;">20</div>
<div class="t" id="r3_code" style="top:571.69px;font-size:13px;font-weight:normal;color:#5e5e5e;letter-spacing:0.310px;left:311.00px;">253615988601</div>
<div class="t" id="r3_date" style="top:571.69px;font-size:13px;font-weight:normal;color:#444;letter-spacing:0.065px;left:444.00px;">04.03.2020</div>
<div class="t" id="r3_time" style="top:574.21px;font-size:10.5px;font-weight:normal;color:#9a9a9a;letter-spacing:0.350px;left:514.00px;">00:32</div>
<div class="t" id="r3_dash" style="top:571.69px;font-size:13px;font-weight:normal;color:#5e5e5e;letter-spacing:0.000px;left:566.00px;">-</div>
<div class="t" id="r3_bez" style="top:571.69px;font-size:13px;font-weight:normal;color:#5e5e5e;letter-spacing:0.246px;left:731.20px;">Wertgutschein 20-253615988601</div>
<div class="t" id="r3_bet" style="top:571.69px;font-size:13px;font-weight:normal;color:#5e5e5e;letter-spacing:0.234px;right:412.17px;">25,00 €</div>
<div class="t" id="r3_off" style="top:571.69px;font-size:13px;font-weight:normal;color:#25a88b;letter-spacing:0.120px;right:332.88px;">0,00 €</div>
<div class="t" id="r3_eing" style="top:571.69px;font-size:13px;font-weight:normal;color:#5e5e5e;letter-spacing:0.233px;right:251.27px;">25,00 €</div>
<div class="t" id="r3_teil" style="top:572.02px;font-size:12.5px;font-weight:normal;color:#555;letter-spacing:0.199px;left:1343.00px;">Teil</div>
<div class="t" id="r3_alles" style="top:572.02px;font-size:12.5px;font-weight:normal;color:#d3d3d3;letter-spacing:-0.200px;left:1400.00px;">Alles</div>
<div class="t" id="r4_nr" style="top:618.69px;font-size:13px;font-weight:normal;color:#5e5e5e;letter-spacing:0.800px;left:273.20px;font-weight:normal;">19</div>
<div class="t" id="r4_code" style="top:618.69px;font-size:13px;font-weight:normal;color:#5e5e5e;letter-spacing:0.401px;left:311.00px;">290574996711</div>
<div class="t" id="r4_date" style="top:618.69px;font-size:13px;font-weight:normal;color:#444;letter-spacing:0.065px;left:444.00px;">05.02.2020</div>
<div class="t" id="r4_time" style="top:621.21px;font-size:10.5px;font-weight:normal;color:#9a9a9a;letter-spacing:0.600px;left:514.00px;">14:46</div>
<div class="t" id="r4_dash" style="top:618.69px;font-size:13px;font-weight:normal;color:#5e5e5e;letter-spacing:0.000px;left:566.00px;">-</div>
<div class="t" id="r4_bez" style="top:618.69px;font-size:13px;font-weight:normal;color:#5e5e5e;letter-spacing:0.281px;left:731.20px;">Wertgutschein 19-290574996711</div>
<div class="t" id="r4_bet" style="top:618.69px;font-size:13px;font-weight:normal;color:#5e5e5e;letter-spacing:0.234px;right:412.17px;">35,00 €</div>
<div class="t" id="r4_off" style="top:618.69px;font-size:13px;font-weight:normal;color:#bd2b4f;letter-spacing:0.101px;right:332.90px;">22,50 €</div>
<div class="t" id="r4_eing" style="top:618.69px;font-size:13px;font-weight:normal;color:#5e5e5e;letter-spacing:0.233px;right:251.27px;">12,50 €</div>
<div class="t" id="r4_teil" style="top:619.02px;font-size:12.5px;font-weight:normal;color:#555;letter-spacing:0.199px;left:1343.00px;">Teil</div>
<div class="t" id="r4_alles" style="top:619.02px;font-size:12.5px;font-weight:normal;color:#555;letter-spacing:-0.200px;left:1400.00px;">Alles</div>
<div class="t" id="r5_nr" style="top:665.69px;font-size:13px;font-weight:normal;color:#1d9fd6;letter-spacing:0.800px;left:273.20px;font-weight:bold;">18</div>
<div class="t" id="r5_code" style="top:665.69px;font-size:13px;font-weight:normal;color:#5e5e5e;letter-spacing:0.310px;left:311.00px;">250769275298</div>
<div class="t" id="r5_date" style="top:665.69px;font-size:13px;font-weight:normal;color:#444;letter-spacing:0.065px;left:444.00px;">05.02.2020</div>
<div class="t" id="r5_time" style="top:668.21px;font-size:10.5px;font-weight:normal;color:#9a9a9a;letter-spacing:0.600px;left:514.00px;">14:44</div>
<div class="t" id="r5_dash" style="top:665.69px;font-size:13px;font-weight:normal;color:#5e5e5e;letter-spacing:0.000px;left:566.00px;">-</div>
<div class="t" id="r5_bez" style="top:665.69px;font-size:13px;font-weight:normal;color:#5e5e5e;letter-spacing:0.246px;left:731.20px;">Wertgutschein 18-250769275298</div>
<div class="t" id="r5_bet" style="top:665.69px;font-size:13px;font-weight:normal;color:#5e5e5e;letter-spacing:0.234px;right:412.17px;">30,00 €</div>
<div class="t" id="r5_off" style="top:665.69px;font-size:13px;font-weight:normal;color:#bd2b4f;letter-spacing:0.267px;right:332.73px;">17,50 €</div>
<div class="t" id="r5_eing" style="top:665.69px;font-size:13px;font-weight:normal;color:#5e5e5e;letter-spacing:0.233px;right:251.27px;">12,50 €</div>
<div class="t" id="r5_teil" style="top:666.02px;font-size:12.5px;font-weight:normal;color:#555;letter-spacing:0.199px;left:1343.00px;">Teil</div>
<div class="t" id="r5_alles" style="top:666.02px;font-size:12.5px;font-weight:normal;color:#555;letter-spacing:-0.200px;left:1400.00px;">Alles</div>
<div class="t" id="p18_akt" style="top:718.61px;font-size:19px;font-weight:normal;color:#565c62;letter-spacing:0.143px;left:286.20px;">Aktionen</div>
<div class="t" id="p18_storn" style="top:776.62px;font-size:12.5px;font-weight:normal;color:#555;letter-spacing:0.242px;left:310.90px;">Stornieren</div>
<div class="t" id="p18_einl" style="top:806.42px;font-size:12.5px;font-weight:normal;color:#555;letter-spacing:-0.040px;left:314.30px;">Einlösungen</div>
<div class="t" id="p18_eing" style="top:718.71px;font-size:19px;font-weight:normal;color:#565c62;letter-spacing:-0.313px;left:487.00px;">Eingelöst 12,50 €</div>
<div class="t" id="p18_fort" style="top:772.59px;font-size:11px;font-weight:normal;color:#555;letter-spacing:0.500px;left:486.70px;">Fortschritt</div>
<div class="t" id="p18_prog" style="top:771.12px;font-size:12.5px;font-weight:normal;color:#555;letter-spacing:0.397px;right:667.10px;">12,50 € / 30,00 €</div>
<div class="t" id="p18_kun" style="top:718.91px;font-size:19px;font-weight:normal;color:#565c62;letter-spacing:-0.300px;left:988.10px;">Kunde</div>
<div class="t" id="p18_kein" style="top:771.12px;font-size:12.5px;font-weight:normal;color:#666;letter-spacing:0.450px;left:988.00px;">Kein Kunde zugewiesen</div>
<div class="t" id="r6_nr" style="top:880.69px;font-size:13px;font-weight:normal;color:#5e5e5e;letter-spacing:0.800px;left:273.20px;font-weight:normal;">17</div>
<div class="t" id="r6_code" style="top:880.69px;font-size:13px;font-weight:normal;color:#5e5e5e;letter-spacing:0.310px;left:311.00px;">230310628308</div>
<div class="t" id="r6_date" style="top:880.69px;font-size:13px;font-weight:normal;color:#444;letter-spacing:0.176px;left:444.00px;">31.01.2020</div>
<div class="t" id="r6_time" style="top:883.21px;font-size:10.5px;font-weight:normal;color:#9a9a9a;letter-spacing:0.350px;left:514.00px;">23:08</div>
<div class="t" id="r6_dash" style="top:880.69px;font-size:13px;font-weight:normal;color:#5e5e5e;letter-spacing:0.000px;left:566.00px;">-</div>
<div class="t" id="r6_bez" style="top:880.69px;font-size:13px;font-weight:normal;color:#5e5e5e;letter-spacing:0.246px;left:731.20px;">Wertgutschein 17-230310628308</div>
<div class="t" id="r6_bet" style="top:880.69px;font-size:13px;font-weight:normal;color:#5e5e5e;letter-spacing:0.234px;right:412.17px;">25,00 €</div>
<div class="t" id="r6_off" style="top:880.69px;font-size:13px;font-weight:normal;color:#25a88b;letter-spacing:0.120px;right:332.88px;">0,00 €</div>
<div class="t" id="r6_eing" style="top:880.69px;font-size:13px;font-weight:normal;color:#5e5e5e;letter-spacing:0.233px;right:251.27px;">25,00 €</div>
<div class="t" id="r6_teil" style="top:881.02px;font-size:12.5px;font-weight:normal;color:#555;letter-spacing:0.199px;left:1343.00px;">Teil</div>
<div class="t" id="r6_alles" style="top:881.02px;font-size:12.5px;font-weight:normal;color:#d3d3d3;letter-spacing:-0.200px;left:1400.00px;">Alles</div>
</body></html>
